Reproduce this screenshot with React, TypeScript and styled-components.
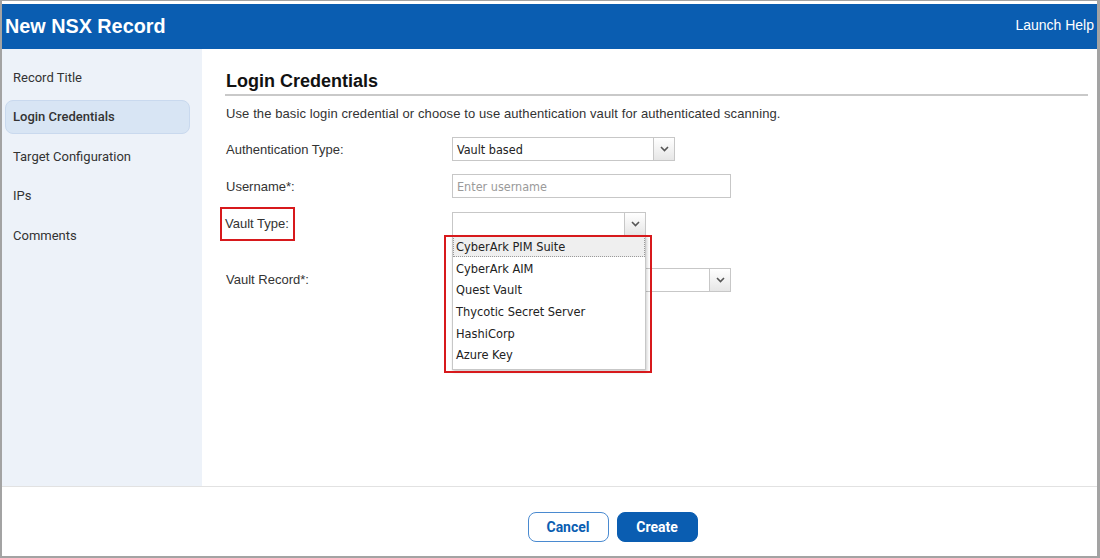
import React from 'react'
import styled, { createGlobalStyle } from 'styled-components'

const GlobalStyle = createGlobalStyle`
	html, body {
		margin: 0;
		padding: 0;
		background: #ffffff;
	}
	body {
		font-family: 'Liberation Sans', Arial, sans-serif;
	}
`

const navItems = [
	'Record Title',
	'Login Credentials',
	'Target Configuration',
	'IPs',
	'Comments',
]

const vaultTypes = [
	'CyberArk PIM Suite',
	'CyberArk AIM',
	'Quest Vault',
	'Thycotic Secret Server',
	'HashiCorp',
	'Azure Key',
]

const Caret = () => (
	<svg width="9" height="6" viewBox="0 0 9 6">
		<path d="M1 1 L4.5 4.5 L8 1" fill="none" stroke="#555" strokeWidth="1.6" />
	</svg>
)

export default function App() {
	return (
		<>
			<GlobalStyle />
			<Frame>
				<Header>
					<Title>New NSX Record</Title>
					<HelpLink>Launch Help</HelpLink>
				</Header>
				<Body>
					<Sidebar>
						{navItems.map((item) => (
							<NavItem key={item} active={item === 'Login Credentials'}>
								{item}
							</NavItem>
						))}
					</Sidebar>
					<Main>
						<SectionTitle>Login Credentials</SectionTitle>
						<Description>
							Use the basic login credential or choose to use authentication vault
							for authenticated scanning.
						</Description>
						<Row>
							<Label>Authentication Type:</Label>
							<Select width={223}>
								<SelectValue>Vault based</SelectValue>
								<ArrowBox>
									<Caret />
								</ArrowBox>
							</Select>
						</Row>
						<Row>
							<Label>Username*:</Label>
							<TextInput width={279}>Enter username</TextInput>
						</Row>
						<Row>
							<Label>
								<Highlight>Vault Type:</Highlight>
							</Label>
							<SelectWrap>
								<Select width={194}>
									<SelectValue />
									<ArrowBox>
										<Caret />
									</ArrowBox>
								</Select>
								<DropList>
									{vaultTypes.map((v, i) => (
										<DropItem key={v} selected={i === 0}>
											{v}
										</DropItem>
									))}
								</DropList>
								<ListHighlight />
							</SelectWrap>
						</Row>
						<Row gapTop={19}>
							<Label>Vault Record*:</Label>
							<Select width={279}>
								<SelectValue />
								<ArrowBox>
									<Caret />
								</ArrowBox>
							</Select>
						</Row>
					</Main>
				</Body>
				<Footer>
					<Button>Cancel</Button>
					<Button primary>Create</Button>
				</Footer>
			</Frame>
		</>
	)
}

const Frame = styled.div`
	width: 1100px;
	height: 558px;
	box-sizing: border-box;
	border-style: solid;
	border-color: #a3a3a3;
	border-width: 1px 3px 2px 2px;
	padding-top: 3px;
	display: flex;
	flex-direction: column;
	background: #ffffff;
	overflow: hidden;
`

const Header = styled.div`
	height: 45px;
	flex: none;
	background: #0a5db1;
	display: flex;
	align-items: center;
	justify-content: space-between;
	padding: 0 3px 0 3px;
`

const Title = styled.div`
	font-family: 'Liberation Sans', Arial, sans-serif;
	font-weight: 700;
	font-size: 19.8px;
	color: #ffffff;
	margin-top: -1px;
`

const HelpLink = styled.div`
	font-family: 'Liberation Sans', Arial, sans-serif;
	font-size: 14px;
	color: #ffffff;
	margin-top: -4px;
`

const Body = styled.div`
	flex: 1;
	display: flex;
	min-height: 0;
`

const Sidebar = styled.div`
	width: 200px;
	flex: none;
	background: #edf2f9;
	padding: 11px 12px 0 3px;
	box-sizing: border-box;
	display: flex;
	flex-direction: column;
	gap: 5.5px;
`

const NavItem = styled.div<{ active?: boolean }>`
	height: 34px;
	box-sizing: border-box;
	display: flex;
	align-items: center;
	padding-left: 7px;
	border-radius: 8px;
	font-family: Roboto, 'Liberation Sans', sans-serif;
	font-size: 13px;
	font-weight: ${({ active }) => (active ? 500 : 400)};
	color: #333333;
	background: ${({ active }) => (active ? '#d8e5f4' : 'transparent')};
	border: 1px solid ${({ active }) => (active ? '#c9d9ee' : 'transparent')};
`

const Main = styled.div`
	flex: 1;
	padding: 20px 9px 0 23px;
	display: flex;
	flex-direction: column;
`

const SectionTitle = styled.div`
	font-family: 'Liberation Sans', Arial, sans-serif;
	font-weight: 700;
	font-size: 18px;
	color: #111111;
	padding: 1px 0 2px 1px;
	border-bottom: 2px solid #c9c9c9;
	line-height: 22px;
`

const Description = styled.div`
	font-size: 13px;
	letter-spacing: 0.1px;
	color: #333333;
	margin: 10px 0 16px 1px;
`

const Row = styled.div<{ gapTop?: number }>`
	display: flex;
	align-items: center;
	height: 24px;
	margin-bottom: 13.3px;
	margin-top: ${({ gapTop }) => gapTop || 0}px;
`

const Label = styled.div`
	width: 226px;
	flex: none;
	font-size: 13px;
	color: #333333;
	position: relative;
	padding-left: 1px;
`

const Highlight = styled.span`
	display: inline-block;
	border: 2px solid #d7191c;
	padding: 7px 4px 8px 3px;
	margin-left: -6px;
	margin-top: 1px;
`

const SelectWrap = styled.div`
	position: relative;
`

const Select = styled.div<{ width: number }>`
	width: ${({ width }) => width}px;
	height: 24px;
	box-sizing: border-box;
	border: 1px solid #c7c7c7;
	display: flex;
	background: #ffffff;
`

const SelectValue = styled.div`
	flex: 1;
	padding-left: 4px;
	display: flex;
	align-items: center;
	font-family: 'DejaVu Sans Condensed', 'DejaVu Sans', sans-serif;
	font-size: 12.5px;
	color: #222222;
`

const ArrowBox = styled.div`
	width: 20px;
	border-left: 1px solid #c7c7c7;
	background: linear-gradient(#ffffff, #e6e6e6);
	display: flex;
	align-items: center;
	justify-content: center;
`

const TextInput = styled.div<{ width: number }>`
	width: ${({ width }) => width}px;
	height: 24px;
	box-sizing: border-box;
	border: 1px solid #c7c7c7;
	padding-left: 4px;
	display: flex;
	align-items: center;
	font-family: 'DejaVu Sans Condensed', 'DejaVu Sans', sans-serif;
	font-size: 12.5px;
	color: #9a9a9a;
`

const DropList = styled.div`
	position: absolute;
	top: 23px;
	left: 0;
	width: 194px;
	box-sizing: border-box;
	background: #ffffff;
	border: 1px solid #c7c7c7;
	box-shadow: 1px 2px 3px rgba(0, 0, 0, 0.2);
	z-index: 2;
	padding-bottom: 3px;
`

const DropItem = styled.div<{ selected?: boolean }>`
	height: 21.7px;
	display: flex;
	align-items: center;
	padding-left: 3px;
	font-family: 'DejaVu Sans Condensed', 'DejaVu Sans', sans-serif;
	font-size: 12.7px;
	color: #222222;
	background: ${({ selected }) => (selected ? '#efefef' : '#ffffff')};
	outline: ${({ selected }) => (selected ? '1px dotted #9a9a9a' : 'none')};
	outline-offset: -1px;
`

const ListHighlight = styled.div`
	position: absolute;
	top: 23px;
	left: -8px;
	width: 208px;
	height: 138px;
	box-sizing: border-box;
	border: 2px solid #d7191c;
	z-index: 3;
	pointer-events: none;
`

const Footer = styled.div`
	height: 70px;
	flex: none;
	box-sizing: border-box;
	border-top: 1px solid #e2e2e2;
	display: flex;
	align-items: flex-start;
	justify-content: center;
	gap: 8px;
	padding: 25px 0 0 126px;
`

const Button = styled.div<{ primary?: boolean }>`
	height: 30px;
	min-width: 81px;
	box-sizing: border-box;
	padding: 0 16px;
	border-radius: 8px;
	display: flex;
	align-items: center;
	justify-content: center;
	font-family: Roboto, 'Liberation Sans', sans-serif;
	font-weight: 700;
	font-size: 14px;
	color: ${({ primary }) => (primary ? '#ffffff' : '#0a5db1')};
	background: ${({ primary }) => (primary ? '#0a5db1' : '#ffffff')};
	border: 1px solid ${({ primary }) => (primary ? '#0a5db1' : '#4a8ad0')};
`
